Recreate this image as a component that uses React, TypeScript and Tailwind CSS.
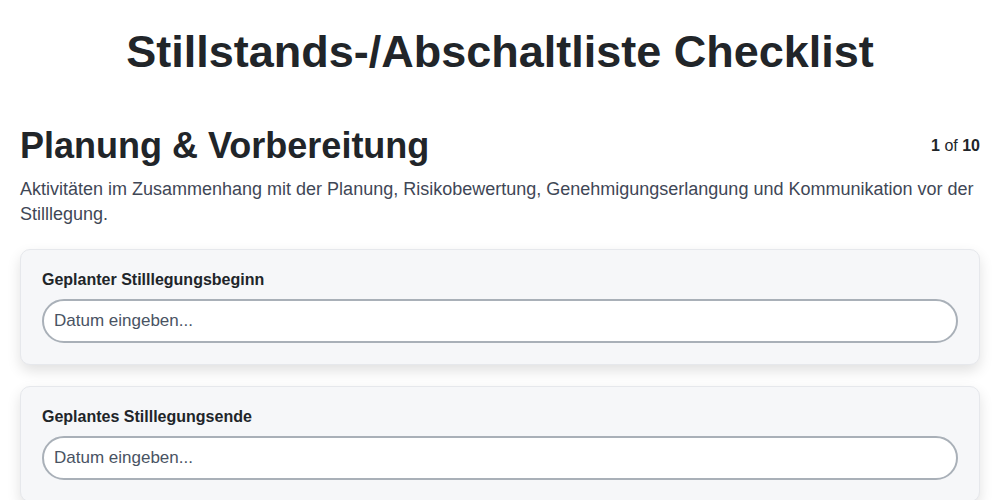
import React from "react";

const fields = ["Geplanter Stilllegungsbeginn", "Geplantes Stilllegungsende"];

export default function App() {
  return (
    <div className="min-h-screen bg-white px-5 text-[#1f2328]" style={{ fontFamily: '"Liberation Sans", Arial, sans-serif' }}>
      <h1 className="pt-[24px] text-center text-[45px] font-bold leading-[56px] text-[#212529]">
        Stillstands-/Abschaltliste Checklist
      </h1>
      <div className="mt-[44px] flex items-start justify-between">
        <h2 className="text-[36px] font-bold leading-[44px] text-[#212529]">Planung &amp; Vorbereitung</h2>
        <div className="pt-[10px] text-[16px] text-[#212529]">
          <span className="font-bold">1</span> of <span className="font-bold">10</span>
        </div>
      </div>
      <p className="mt-[9px] text-[18px] leading-[25px] text-[#3f4756]">
        Aktivitäten im Zusammenhang mit der Planung, Risikobewertung, Genehmigungserlangung und Kommunikation vor der Stilllegung.
      </p>
      <div className="mt-[22px] flex flex-col gap-[21px]">
        {fields.map((f) => (
          <div
            key={f}
            className="rounded-[10px] border border-[#e6e8ec] bg-[#f6f7f9] px-[21px] pb-[21px] pt-[20px] shadow-[0_6px_14px_rgba(0,0,0,0.12)]"
          >
            <label className="block text-[16px] font-bold leading-[20px] text-[#212529]">{f}</label>
            <input
              type="text"
              placeholder="Datum eingeben..."
              className="mt-[9px] block h-[44px] w-full rounded-full border-2 border-[#a9b0b8] bg-white px-[10px] text-[17px] text-[#212529] placeholder:text-[#495363] outline-none"
            />
          </div>
        ))}
      </div>
    </div>
  );
}
